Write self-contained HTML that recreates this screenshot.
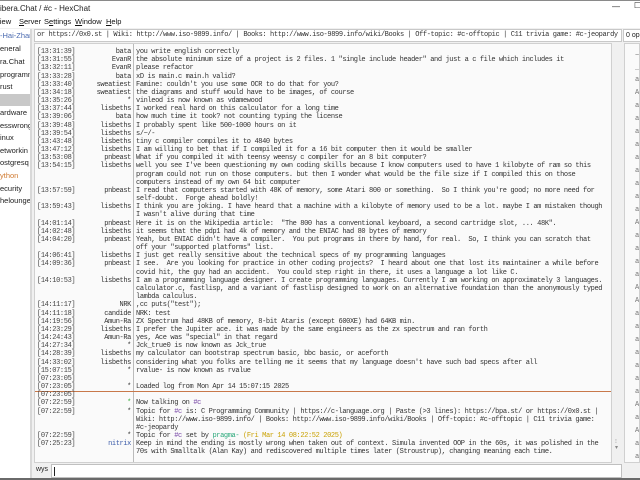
<!DOCTYPE html>
<html><head><meta charset="utf-8"><style>
*{margin:0;padding:0;box-sizing:border-box}
body{width:640px;height:480px;overflow:hidden;background:#f0f0f0;font-family:"Liberation Sans",sans-serif;position:relative}
.title{position:absolute;left:0;top:0;width:640px;height:15px;background:#fff;border-top:1px solid #8a8a8a;font-size:8px;color:#222;padding:3px 0 0 0;white-space:nowrap}
.menu{position:absolute;left:0;top:15px;width:640px;height:13px;background:#fff;font-size:7.5px;color:#111}
.menu span{position:absolute;top:2px}
.side{position:absolute;left:0;top:29px;width:30px;height:451px;background:#fff;font-size:7.5px;color:#222;overflow:hidden;white-space:nowrap}
.side div{position:absolute;left:0;height:12px;line-height:12px;width:30px}
.sep{position:absolute;left:30px;top:29px;width:2px;height:451px;background:#d8d8d8}
.topic{position:absolute;left:34px;top:29px;width:588px;height:13px;background:#fff;border:1px solid #c8c8c8;font:7px "Liberation Mono",monospace;letter-spacing:-0.38px;color:#333;line-height:11px;padding-left:2px;white-space:nowrap;overflow:hidden}
.ops{position:absolute;left:623px;top:29px;width:20px;height:13px;background:#fff;border:1px solid #c8c8c8;font-size:7px;line-height:11px;padding-left:2px;color:#222;white-space:nowrap;overflow:hidden}
.chat{position:absolute;left:34px;top:43px;width:578px;height:420px;background:#fafafa;border:1px solid #d0d0d0;overflow:hidden}
.vl{position:absolute;left:98px;top:0;width:1px;height:420px;background:#bbb}
.rows{position:absolute;left:0;top:4px;width:578px;font:7px "Liberation Mono",monospace;letter-spacing:-0.38px;color:#333}
.r{position:relative;height:8.18px;line-height:8.18px;white-space:pre}
.t{position:absolute;left:2px;color:#444}
.n{position:absolute;right:482px;text-align:right}
.m{position:absolute;left:101px}
.sb{position:absolute;left:612px;top:43px;width:11px;height:420px;background:#f0f0f0}
.users{position:absolute;left:624px;top:43px;width:16px;height:420px;background:#fafafa;border:1px solid #d0d0d0;font:7px "Liberation Mono",monospace;color:#777;overflow:hidden}
.users div{position:absolute;left:10px;height:8px;line-height:8px}
.input{position:absolute;left:51px;top:464px;width:571px;height:14px;background:#fff;border:1px solid #c0c0c0}
.wys{position:absolute;left:36px;top:466px;font-size:7px;color:#222}
.bot{position:absolute;left:0;top:478px;width:640px;height:2px;background:#6a6a6a}
.hl{position:absolute;left:0;width:578px;height:1px;background:#c8784a}
</style></head><body>
<div class="title">ibera.Chat / #c - HexChat<span style="position:absolute;left:612px;top:1px">—</span><span style="position:absolute;left:634px;top:0">☐</span></div>
<div class="menu"><span style="left:-5px"><u>V</u>iew</span><span style="left:19px"><u>S</u>erver</span><span style="left:44px">S<u>e</u>ttings</span><span style="left:75px"><u>W</u>indow</span><span style="left:106px"><u>H</u>elp</span></div>
<div class="side">
<div style="top:1px;color:#4a6ab0">-Hai-Zhan</div>
<div style="top:14px">eneral</div>
<div style="top:27px">ra.Chat</div>
<div style="top:40px">programm</div>
<div style="top:52px">rust</div>
<div style="top:65px;background:#c8c8c8"></div>
<div style="top:78px">ardware</div>
<div style="top:91px">esswrong</div>
<div style="top:103px">inux</div>
<div style="top:116px">etworkin</div>
<div style="top:128px">ostgresq</div>
<div style="top:141px;color:#d07a30">ython</div>
<div style="top:154px">ecurity</div>
<div style="top:166px">helounge</div>
</div>
<div class="sep"></div>
<div class="topic">or https://0x0.st | Wiki: http://www.iso-9899.info/ | Books: http://www.iso-9899.info/wiki/Books | Off-topic: #c-offtopic | C11 trivia game: #c-jeopardy</div>
<div class="ops">0 op</div>
<div class="chat"><div class="vl"></div>
<div class="hl" style="top:347px"></div>
<div class="rows">
<div class="r"><span class="t">[13:31:39]</span><span class="n">bata</span><span class="m">you write english correctly</span></div>
<div class="r"><span class="t">[13:31:55]</span><span class="n">EvanR</span><span class="m">the absolute minimum size of a project is 2 files. 1 "single include header" and just a c file which includes it</span></div>
<div class="r"><span class="t">[13:32:11]</span><span class="n">EvanR</span><span class="m">please refactor</span></div>
<div class="r"><span class="t">[13:33:28]</span><span class="n">bata</span><span class="m">xD is main.c main.h valid?</span></div>
<div class="r"><span class="t">[13:33:40]</span><span class="n">sweatiest</span><span class="m">Famine: couldn't you use some OCR to do that for you?</span></div>
<div class="r"><span class="t">[13:34:18]</span><span class="n">sweatiest</span><span class="m">the diagrams and stuff would have to be images, of course</span></div>
<div class="r"><span class="t">[13:35:26]</span><span class="n">*</span><span class="m">vinleod is now known as vdamewood</span></div>
<div class="r"><span class="t">[13:37:44]</span><span class="n">lisbeths</span><span class="m">I worked real hard on this calculator for a long time</span></div>
<div class="r"><span class="t">[13:39:06]</span><span class="n">bata</span><span class="m">how much time it took? not counting typing the license</span></div>
<div class="r"><span class="t">[13:39:48]</span><span class="n">lisbeths</span><span class="m">I probably spent like 500-1000 hours on it</span></div>
<div class="r"><span class="t">[13:39:54]</span><span class="n">lisbeths</span><span class="m">s/~/-</span></div>
<div class="r"><span class="t">[13:43:48]</span><span class="n">lisbeths</span><span class="m">tiny c compiler compiles it to 4840 bytes</span></div>
<div class="r"><span class="t">[13:47:12]</span><span class="n">lisbeths</span><span class="m">I am willing to bet that if I compiled it for a 16 bit computer then it would be smaller</span></div>
<div class="r"><span class="t">[13:53:08]</span><span class="n">pnbeast</span><span class="m">What if you compiled it with teensy weensy c compiler for an 8 bit computer?</span></div>
<div class="r"><span class="t">[13:54:15]</span><span class="n">lisbeths</span><span class="m">well you see I've been questioning my own coding skills because I know computers used to have 1 kilobyte of ram so this</span></div>
<div class="r"><span class="m">program could not run on those computers. but then I wonder what would be the file size if I compiled this on those</span></div>
<div class="r"><span class="m">computers instead of my own 64 bit computer</span></div>
<div class="r"><span class="t">[13:57:59]</span><span class="n">pnbeast</span><span class="m">I read that computers started with 48K of memory, some Atari 800 or something.  So I think you're good; no more need for</span></div>
<div class="r"><span class="m">self-doubt.  Forge ahead boldly!</span></div>
<div class="r"><span class="t">[13:59:43]</span><span class="n">lisbeths</span><span class="m">I think you are joking. I have heard that a machine with a kilobyte of memory used to be a lot. maybe I am mistaken though</span></div>
<div class="r"><span class="m">I wasn't alive during that time</span></div>
<div class="r"><span class="t">[14:01:14]</span><span class="n">pnbeast</span><span class="m">Here it is on the Wikipedia article:  "The 800 has a conventional keyboard, a second cartridge slot, ... 48K".</span></div>
<div class="r"><span class="t">[14:02:48]</span><span class="n">lisbeths</span><span class="m">it seems that the pdp1 had 4k of memory and the ENIAC had 80 bytes of memory</span></div>
<div class="r"><span class="t">[14:04:20]</span><span class="n">pnbeast</span><span class="m">Yeah, but ENIAC didn't have a compiler.  You put programs in there by hand, for real.  So, I think you can scratch that</span></div>
<div class="r"><span class="m">off your "supported platforms" list.</span></div>
<div class="r"><span class="t">[14:06:41]</span><span class="n">lisbeths</span><span class="m">I just get really sensitive about the technical specs of my programming languages</span></div>
<div class="r"><span class="t">[14:09:36]</span><span class="n">pnbeast</span><span class="m">I see.  Are you looking for practice in other coding projects?  I heard about one that lost its maintainer a while before</span></div>
<div class="r"><span class="m">covid hit, the guy had an accident.  You could step right in there, it uses a language a lot like C.</span></div>
<div class="r"><span class="t">[14:10:53]</span><span class="n">lisbeths</span><span class="m">I am a programming language designer. I create programming languages. Currently I am working on approximately 3 languages.</span></div>
<div class="r"><span class="m">calculator.c, fastlisp, and a variant of fastlisp designed to work on an alternative foundation than the anonymously typed</span></div>
<div class="r"><span class="m">lambda calculus.</span></div>
<div class="r"><span class="t">[14:11:17]</span><span class="n">NRK</span><span class="m">,cc puts("test");</span></div>
<div class="r"><span class="t">[14:11:18]</span><span class="n">candide</span><span class="m">NRK: test</span></div>
<div class="r"><span class="t">[14:19:56]</span><span class="n">Amun-Ra</span><span class="m">ZX Spectrum had 48KB of memory, 8-bit Ataris (except 600XE) had 64KB min.</span></div>
<div class="r"><span class="t">[14:23:29]</span><span class="n">lisbeths</span><span class="m">I prefer the Jupiter ace. it was made by the same engineers as the zx spectrum and ran forth</span></div>
<div class="r"><span class="t">[14:24:43]</span><span class="n">Amun-Ra</span><span class="m">yes, Ace was "special" in that regard</span></div>
<div class="r"><span class="t">[14:27:34]</span><span class="n">*</span><span class="m">Jck_true0 is now known as Jck_true</span></div>
<div class="r"><span class="t">[14:28:39]</span><span class="n">lisbeths</span><span class="m">my calculator can bootstrap spectrum basic, bbc basic, or aceforth</span></div>
<div class="r"><span class="t">[14:33:02]</span><span class="n">lisbeths</span><span class="m">considering what you folks are telling me it seems that my language doesn't have such bad specs after all</span></div>
<div class="r"><span class="t">[15:07:15]</span><span class="n">*</span><span class="m">rvalue- is now known as rvalue</span></div>
<div class="r"><span class="t">[07:23:05]</span></div>
<div class="r"><span class="t">[07:23:05]</span><span class="n">*</span><span class="m">Loaded log from Mon Apr 14 15:07:15 2025</span></div>
<div class="r"><span class="t">[07:23:05]</span></div>
<div class="r"><span class="t">[07:22:59]</span><span class="n" style="color:#3a3">*</span><span class="m">Now talking on <span style="color:#7a4aa8">#c</span></span></div>
<div class="r"><span class="t">[07:22:59]</span><span class="n">*</span><span class="m">Topic for <span style="color:#7a4aa8">#c</span> is: C Programming Community | https://c-language.org | Paste (&gt;3 lines): https://bpa.st/ or https://0x0.st |</span></div>
<div class="r"><span class="m">Wiki: http://www.iso-9899.info/ | Books: http://www.iso-9899.info/wiki/Books | Off-topic: #c-offtopic | C11 trivia game:</span></div>
<div class="r"><span class="m">#c-jeopardy</span></div>
<div class="r"><span class="t">[07:22:59]</span><span class="n">*</span><span class="m">Topic for <span style="color:#7a4aa8">#c</span> set by <span style="color:#2aa87a">pragma-</span> <span style="color:#c9a000">(Fri Mar 14 08:22:52 2025)</span></span></div>
<div class="r"><span class="t">[07:25:23]</span><span class="n" style="color:#3a5aa8">nitrix</span><span class="m">Keep in mind the ending is mostly wrong when taken out of context. Simula invented OOP in the 60s, it was polished in the</span></div>
<div class="r"><span class="m">70s with Smalltalk (Alan Kay) and rediscovered multiple times later (Stroustrup), changing meaning each time.</span></div>
</div></div>
<div class="sb"><div style="position:absolute;left:3px;top:396px;font-size:6px;color:#888;line-height:6px">⁝<br>▾</div></div>
<div class="users">
<div style="top:8px">~</div><div style="top:20px">_</div><div style="top:32px">a</div><div style="top:45px">A</div><div style="top:58px">a</div><div style="top:71px">a</div><div style="top:84px">a</div><div style="top:97px">a</div><div style="top:110px">a</div><div style="top:123px">a</div><div style="top:136px">a</div><div style="top:149px">a</div><div style="top:162px">a</div><div style="top:175px">A</div><div style="top:188px">a</div><div style="top:201px">a</div><div style="top:214px">a</div><div style="top:227px">a</div><div style="top:240px">A</div><div style="top:253px">A</div><div style="top:266px">a</div><div style="top:279px">a</div><div style="top:292px">a</div><div style="top:305px">a</div><div style="top:318px">a</div><div style="top:331px">a</div><div style="top:344px">a</div><div style="top:357px">A</div><div style="top:370px">a</div><div style="top:383px">A</div><div style="top:396px">a</div><div style="top:409px">a</div>
</div>
<div class="wys">wys</div>
<div class="input"><div style="position:absolute;left:2px;top:2px;width:1px;height:9px;background:#222"></div></div>
<div class="bot"></div>
</body></html>
